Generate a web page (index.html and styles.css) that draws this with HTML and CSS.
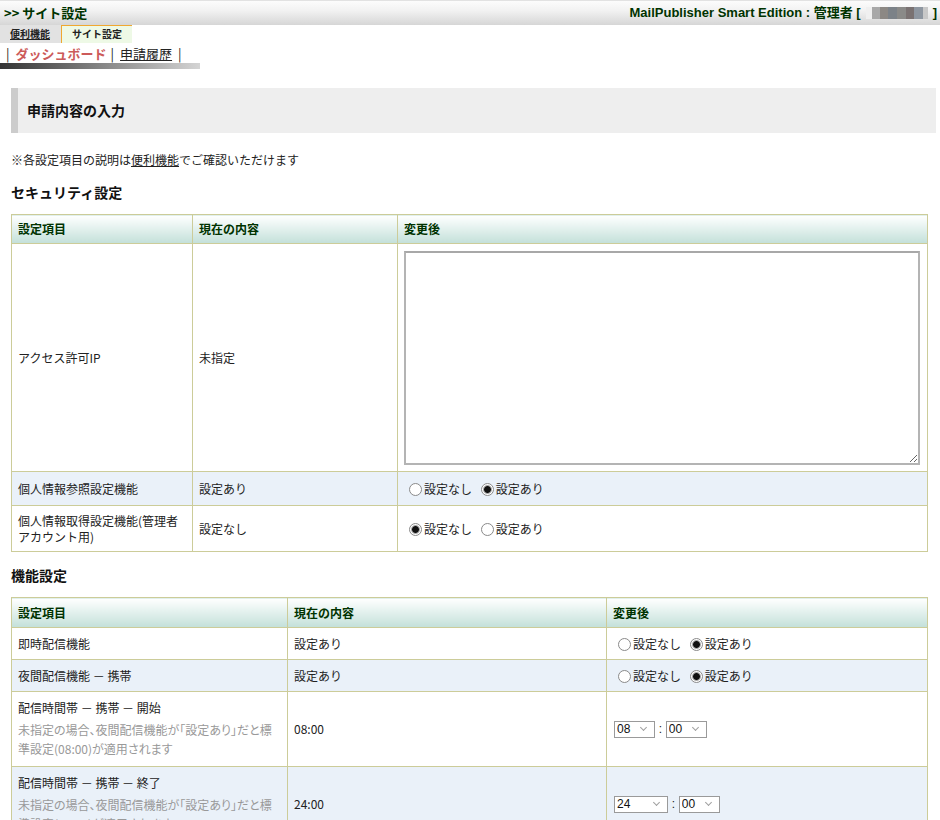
FILE: index.html
```html
<!DOCTYPE html>
<html lang="ja">
<head>
    <meta charset="UTF-8">
    <title>サイト設定</title>
    <link rel="stylesheet" href="styles.css">
</head>
<body>
    <div class="topbar">
        <div class="crumb">&gt;&gt; サイト設定</div>
        <div class="user">MailPublisher Smart Edition : 管理者 [ <span class="blur"></span> ]</div>
    </div>

    <div class="tabs">
        <a class="tab" href="#">便利機能</a>
        <span class="tab active">サイト設定</span>
    </div>

    <div class="subnav">
        <span class="pipe">|</span><span class="current">ダッシュボード</span><span class="pipe">|</span><a href="#">申請履歴</a><span class="pipe">|</span>
    </div>
    <div class="subnav-bar"></div>

    <div class="main">
        <h2 class="page-title">申請内容の入力</h2>

        <p class="note">※各設定項目の説明は<a href="#">便利機能</a>でご確認いただけます</p>

        <h3 class="section">セキュリティ設定</h3>
        <table class="settings sec">
            <colgroup>
                <col class="c1"><col class="c2"><col class="c3">
            </colgroup>
            <tr class="head">
                <th>設定項目</th>
                <th>現在の内容</th>
                <th>変更後</th>
            </tr>
            <tr class="tall">
                <td>アクセス許可IP</td>
                <td>未指定</td>
                <td><textarea class="ip-list"></textarea></td>
            </tr>
            <tr class="alt r34">
                <td>個人情報参照設定機能</td>
                <td>設定あり</td>
                <td>
                    <label><input type="radio" name="ref">設定なし</label>
                    <label><input type="radio" name="ref" checked>設定あり</label>
                </td>
            </tr>
            <tr class="r46">
                <td>個人情報取得設定機能(管理者<br>アカウント用)</td>
                <td>設定なし</td>
                <td>
                    <label><input type="radio" name="get" checked>設定なし</label>
                    <label><input type="radio" name="get">設定あり</label>
                </td>
            </tr>
        </table>

        <h3 class="section">機能設定</h3>
        <table class="settings func">
            <colgroup>
                <col class="c1"><col class="c2"><col class="c3">
            </colgroup>
            <tr class="head">
                <th>設定項目</th>
                <th>現在の内容</th>
                <th>変更後</th>
            </tr>
            <tr class="r32">
                <td>即時配信機能</td>
                <td>設定あり</td>
                <td>
                    <label><input type="radio" name="now">設定なし</label>
                    <label><input type="radio" name="now" checked>設定あり</label>
                </td>
            </tr>
            <tr class="alt r32">
                <td>夜間配信機能 － 携帯</td>
                <td>設定あり</td>
                <td>
                    <label><input type="radio" name="night">設定なし</label>
                    <label><input type="radio" name="night" checked>設定あり</label>
                </td>
            </tr>
            <tr class="r75">
                <td class="desc-cell">
                    <div class="item">配信時間帯 － 携帯 － 開始</div>
                    <div class="desc">未指定の場合、夜間配信機能が「設定あり」だと標<br>準設定(08:00)が適用されます</div>
                </td>
                <td>08:00</td>
                <td>
                    <span class="sel"><select class="hour"><option>08</option></select></span>
                    <span class="colon">:</span>
                    <span class="sel"><select class="min"><option>00</option></select></span>
                </td>
            </tr>
            <tr class="alt r75">
                <td class="desc-cell">
                    <div class="item">配信時間帯 － 携帯 － 終了</div>
                    <div class="desc">未指定の場合、夜間配信機能が「設定あり」だと標<br>準設定(24:00)が適用されます</div>
                </td>
                <td>24:00</td>
                <td>
                    <span class="sel"><select class="hour wide"><option>24</option></select></span>
                    <span class="colon">:</span>
                    <span class="sel"><select class="min"><option>00</option></select></span>
                </td>
            </tr>
        </table>
    </div>
</body>
</html>
```

FILE: styles.css
```css
* {
    margin: 0;
    padding: 0;
    box-sizing: border-box;
}

body {
    font-family: "Noto Sans CJK JP", "Liberation Sans", sans-serif;
    font-size: 12px;
    line-height: 16px;
    color: #222;
    background: white;
}

a {
    color: #222;
}

/* header */

.topbar {
    height: 25px;
    border-top: 1px solid #e2e2e2;
    background: linear-gradient(#fcfcfc, #f2f2f2 40%, #d6d6d6);
    display: flex;
    justify-content: space-between;
    align-items: center;
    padding: 0 3px 0 4px;
    color: #003300;
    font-weight: bold;
    white-space: nowrap;
}

.crumb {
    font-size: 13px;
}

.user {
    font-family: "Liberation Sans", "Noto Sans CJK JP", sans-serif;
    font-size: 13px;
    display: flex;
    align-items: center;
    gap: 5px;
}

.user .blur {
    display: inline-block;
    width: 62px;
    height: 12px;
    background: linear-gradient(to right, #f0f0f0 0 10%, #a8a8a8 10% 22%, #8c8884 22% 36%, #7c8288 36% 50%, #8a8a88 50% 64%, #7a7272 64% 78%, #8e96a0 78% 92%, #c8c8c8 92%);
    filter: blur(0.6px);
}

.tabs {
    display: flex;
    height: 18px;
    font-size: 10px;
    font-weight: bold;
    line-height: 17px;
    white-space: nowrap;
}

.tab {
    padding: 0 10px;
    color: #222;
}

.tabs a.tab {
    background: #e2e2e2;
    padding-right: 11px;
}

.tab.active {
    background: #eef9e6;
    border-left: 1px solid #f0a830;
    border-top: 1px solid #f0a830;
    line-height: 16px;
}

.subnav {
    font-size: 13px;
    line-height: 18px;
    padding: 2px 0 0 4px;
    height: 20px;
    color: #222;
    white-space: nowrap;
}

.subnav .pipe {
    margin: 0 6px 0 2px;
}

.subnav .current {
    color: #cc5a5a;
    font-weight: bold;
    margin-right: 2px;
}

.subnav a {
    margin-right: 4px;
}

.subnav-bar {
    width: 200px;
    height: 6px;
    background: linear-gradient(to right, #343434, #d4d4d4);
}

/* main */

.main {
    padding: 19px 12px 0 11px;
}

.page-title {
    height: 45px;
    background: #eeeeee;
    border-left: 7px solid #cccccc;
    padding-left: 9px;
    font-size: 14px;
    line-height: 44px;
    color: #111;
    margin-right: -8px;
}

.note {
    margin-top: 19px;
    line-height: 16px;
}

.section {
    font-size: 14px;
    margin-top: 15px;
    line-height: 18px;
    color: #111;
}

.settings {
    width: 917px;
    border-collapse: collapse;
    table-layout: fixed;
    margin-top: 13px;
}

.settings + .section {
    margin-top: 14px;
}

.settings th,
.settings td {
    border: 1px solid #cccc99;
    padding: 0 6px;
    text-align: left;
    vertical-align: middle;
}

.settings tr.head {
    height: 29px;
}

.func tr.head {
    height: 30px;
}

.settings th {
    background: linear-gradient(#ffffff, #edf6f4 30%, #c3e0d9);
    color: #003300;
    font-weight: bold;
}

.sec .c1 { width: 181px; }
.sec .c2 { width: 205px; }
.func .c1 { width: 276px; }
.func .c2 { width: 319px; }

.settings tr.alt td {
    background: #eaf1f9;
}

.tall { height: 228px; }
.r34 { height: 34px; }
.r46 { height: 46px; }
.r32 { height: 32px; }
.r75 { height: 75px; }

.ip-list {
    display: block;
    width: 516px;
    height: 214px;
    border: 2px solid #b4b4b4;
    border-top-color: #a8a8a8;
    resize: both;
    font-family: inherit;
}

/* radios */

label {
    white-space: nowrap;
    margin-right: 1px;
}

input[type="radio"] {
    appearance: none;
    width: 13px;
    height: 13px;
    margin: 0 2px 0 5px;
    vertical-align: -2px;
    border: 1px solid #8a8a8a;
    border-radius: 50%;
    background: white;
}

input[type="radio"]:checked {
    background: radial-gradient(circle, #111 0 3px, #777 3.5px, #d8d8d8 4.5px, white 5px);
}

/* description rows */

.item {
    line-height: 16px;
}

.desc {
    margin-top: 4px;
    line-height: 19px;
    color: #999;
    white-space: nowrap;
    font-feature-settings: "palt";
}

/* selects */

.sel {
    position: relative;
    display: inline-block;
    vertical-align: middle;
}

.sel::after {
    content: "";
    position: absolute;
    right: 9px;
    top: 5px;
    width: 4px;
    height: 4px;
    border-right: 1px solid #a0a0a0;
    border-bottom: 1px solid #a0a0a0;
    transform: rotate(45deg);
    pointer-events: none;
}

select {
    appearance: none;
    height: 17px;
    border: 1px solid #9a9a9a;
    background: white;
    font-family: "Liberation Sans", sans-serif;
    font-size: 12px;
    line-height: 15px;
    padding: 0 0 0 2px;
    color: #111;
    border-radius: 0;
}

select.hour { width: 41px; margin-left: 1px; }
select.hour.wide { width: 54px; }
select.min { width: 41px; }

.colon {
    font-family: "Liberation Sans", sans-serif;
    margin: 0 1px;
    vertical-align: middle;
}
```
